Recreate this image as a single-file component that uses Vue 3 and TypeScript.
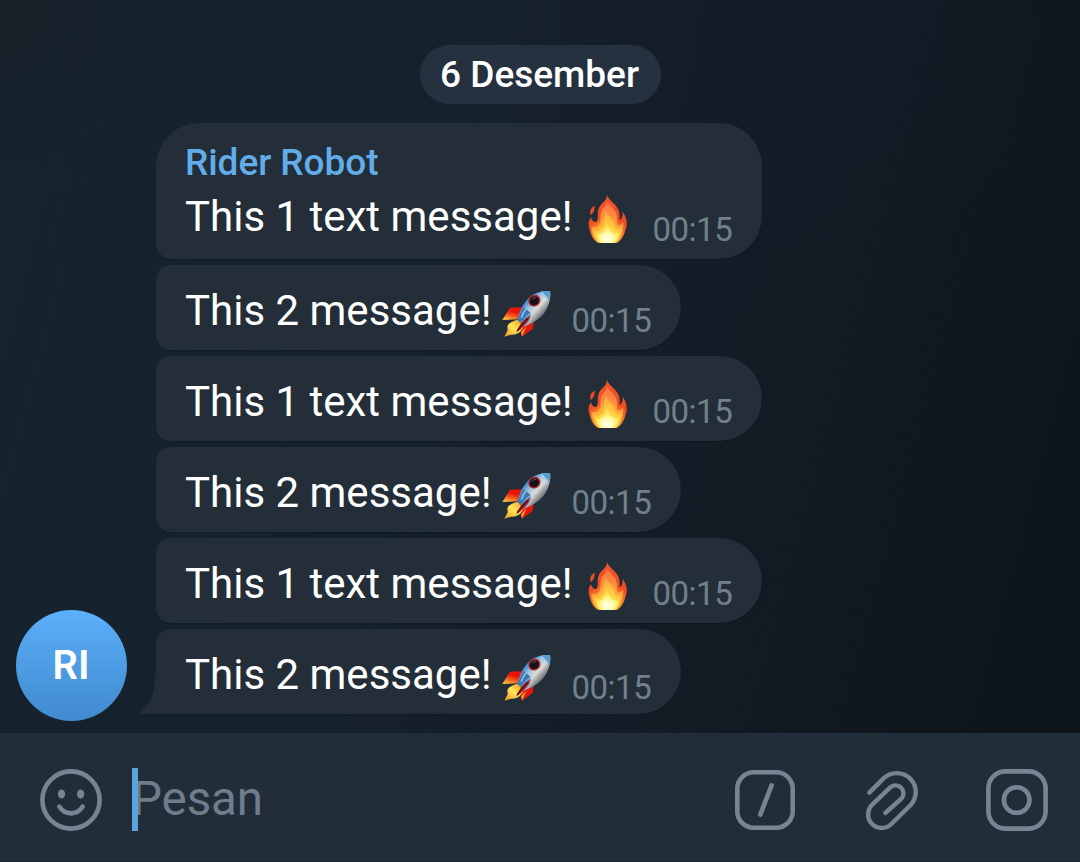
<script setup lang="ts">
type Emoji = 'fire' | 'rocket'

interface Message {
  id: number
  author?: string
  text: string
  emoji: Emoji
  time: string
}

const messages: Message[] = [
  { id: 1, author: 'Rider Robot', text: 'This 1 text message!', emoji: 'fire', time: '00:15' },
  { id: 2, text: 'This 2 message!', emoji: 'rocket', time: '00:15' },
  { id: 3, text: 'This 1 text message!', emoji: 'fire', time: '00:15' },
  { id: 4, text: 'This 2 message!', emoji: 'rocket', time: '00:15' },
  { id: 5, text: 'This 1 text message!', emoji: 'fire', time: '00:15' },
  { id: 6, text: 'This 2 message!', emoji: 'rocket', time: '00:15' },
]
</script>

<template>
  <div class="screen">
    <svg class="defs" width="0" height="0" aria-hidden="true">
      <defs>
        <radialGradient id="flameOuter" gradientUnits="userSpaceOnUse" cx="58" cy="128" r="130">
          <stop offset="0" stop-color="#ffd23c" />
          <stop offset="0.3" stop-color="#fb8a2c" />
          <stop offset="0.5" stop-color="#f04c22" />
          <stop offset="1" stop-color="#f0552c" />
        </radialGradient>
        <radialGradient id="flameMid" gradientUnits="userSpaceOnUse" cx="58" cy="128" r="115">
          <stop offset="0" stop-color="#ffe24c" />
          <stop offset="0.35" stop-color="#ffb038" />
          <stop offset="0.6" stop-color="#fc8a3c" />
          <stop offset="1" stop-color="#f97048" />
        </radialGradient>
        <radialGradient id="flameInner" gradientUnits="userSpaceOnUse" cx="58" cy="128" r="85">
          <stop offset="0" stop-color="#fff37a" />
          <stop offset="0.4" stop-color="#ffcf3e" />
          <stop offset="1" stop-color="#ffa048" />
        </radialGradient>
        <radialGradient id="flameCore" gradientUnits="userSpaceOnUse" cx="58" cy="132" r="48">
          <stop offset="0" stop-color="#fffff2" />
          <stop offset="0.35" stop-color="#fffbac" />
          <stop offset="0.75" stop-color="#ffe650" />
          <stop offset="1" stop-color="#ffd040" />
        </radialGradient>
        <linearGradient id="hull" gradientUnits="userSpaceOnUse" x1="68" y1="40" x2="112" y2="80">
          <stop offset="0" stop-color="#4a8fd0" />
          <stop offset="0.28" stop-color="#a3c4dc" />
          <stop offset="0.6" stop-color="#dcdcd6" />
          <stop offset="1" stop-color="#70777c" />
        </linearGradient>
        <linearGradient id="finLeft" gradientUnits="userSpaceOnUse" x1="34" y1="48" x2="22" y2="90">
          <stop offset="0.3" stop-color="#ec1408" />
          <stop offset="0.6" stop-color="#f4581c" />
          <stop offset="1" stop-color="#ffc83c" />
        </linearGradient>
        <linearGradient id="exhaust" x1="1" y1="0" x2="0" y2="1">
          <stop offset="0.1" stop-color="#f5a623" />
          <stop offset="0.5" stop-color="#ffe65a" />
          <stop offset="1" stop-color="#e8921c" />
        </linearGradient>
      </defs>
    </svg>

    <main class="chat">
      <div class="date">6 Desember</div>

      <div class="group">
        <div class="avatar">RI</div>
        <div class="bubbles">
          <article
            v-for="(m, i) in messages"
            :key="m.id"
            class="bubble"
            :class="{ first: i === 0, last: i === messages.length - 1 }"
          >
            <svg v-if="i === messages.length - 1" class="tail" viewBox="0 0 17 40" aria-hidden="true">
              <path d="M15 0 C15 20 11 30 1.2 35.6 C-.6 36.8 0 40 2 40 L17 40 L17 0 Z" />
            </svg>
            <div v-if="m.author" class="author">{{ m.author }}</div>
            <div class="line">
              <span class="text">{{ m.text }}</span>
              <svg v-if="m.emoji === 'fire'" class="emoji" viewBox="-15 0 150 144" role="img" aria-label="fire">
                <path d="M20 32 C8 38 4 48 8 60 C15 55 21 45 20 32 Z" fill="#ee4a28" />
                <path
                  d="M57 0 C62 16 84 26 92 46 C96 58 95 68 95 76 C102 71 105 62 104 50 C112 62 118 75 116 92 C115 98 113 102 112 106 C108 124 98 138 86 144 L32 144 C18 138 10 124 6 108 C3 98 0 90 3 79 C5 73 7 70 9 67 C12 78 18 82 24 81 C34 75 25 56 33 38 C39 24 56 20 57 0 Z"
                  fill="url(#flameOuter)"
                />
                <path
                  d="M56 18 C63 32 82 42 86 60 C88 76 86 85 88 91 C96 92 102 88 106 82 C107 105 99 132 84 144 L34 144 C19 134 10 116 11 94 C18 99 28 97 33 90 C42 78 34 66 40 50 C45 36 57 34 56 18 Z"
                  fill="url(#flameMid)"
                />
                <path
                  d="M54 44 C57 60 75 70 78 88 C79 98 83 103 89 103 C94 103 97 101 100 97 C100 120 92 138 80 144 L38 144 C27 138 19 125 18 106 C27 110 37 108 42 101 C52 88 44 66 54 44 Z"
                  fill="url(#flameInner)"
                />
                <path
                  d="M57 82 C62 96 66 108 74 113 C80 117 88 115 93 111 C92 128 85 139 76 144 L42 144 C32 139 26 129 25 114 C33 118 43 116 48 108 C53 100 54 94 57 82 Z"
                  fill="url(#flameCore)"
                />
              </svg>
              <svg v-else class="emoji rocket" viewBox="0 0 150 144" role="img" aria-label="rocket">
                <path d="M60 49 L24 50 L1 87 L46 85 Z" fill="url(#finLeft)" />
                <path d="M96 84 L92 114 L60 137 L58 110 Z" fill="#e5170d" />
                <path d="M74 106 L60 137 L57 124 Z" fill="#ff9a2e" />
                <path d="M47 86 C30 90 20 96 16 106 L17 118 L7 137 L28 131 C44 132 57 124 64 108 Z" fill="url(#exhaust)" />
                <path d="M144 1 C128 -2 104 3 87 15 C68 30 56 52 47 83 L64 108 C92 96 118 82 131 59 C143 40 147 18 144 1 Z" fill="url(#hull)" />
                <path d="M144 1 C134 -1 122 1 112 4 C121 10 134 21 141 31 C145 20 146 10 144 1 Z" fill="#5a9ccc" />
                <path d="M118 4 L138 25" stroke="#a9cfe8" stroke-width="5" />
                <path d="M66 48 C58 58 52 70 47 83 L58 98 C64 84 76 72 86 66 Z" fill="#3c78b4" />
                <path d="M73 52 C67 60 61 70 58 80" stroke="#8cbce0" stroke-width="5" fill="none" />
                <path d="M91 67 C78 76 94 84 64 108 L56 96 C64 84 76 73 91 67 Z" fill="#4f8fc8" />
                <path d="M86 74 C68 82 54 98 42 125 C60 113 76 96 86 74 Z" fill="#c41717" />
                <path d="M78 82 C66 92 55 106 46 119" stroke="#5e1018" stroke-width="5" fill="none" />
                <ellipse cx="97" cy="29" rx="19" ry="17" transform="rotate(-35 97 29)" fill="#b8242b" />
                <ellipse cx="97" cy="29" rx="14.5" ry="13" transform="rotate(-35 97 29)" fill="#15131a" />
                <path d="M90 26 C93 20 98 19 102 20" stroke="#5b5960" stroke-width="3" fill="none" />
              </svg>
              <time class="time">{{ m.time }}</time>
            </div>
          </article>
        </div>
      </div>
    </main>

    <footer class="composer">
      <svg class="icon smile" viewBox="0 0 62 62" aria-hidden="true">
        <circle cx="31" cy="31" r="28.6" />
        <path d="M19.3 37.6 C25 46.6 37 46.6 42.7 37.6" />
        <ellipse class="solid" cx="21.5" cy="25" rx="3.6" ry="4.6" />
        <ellipse class="solid" cx="40.6" cy="25" rx="3.6" ry="4.6" />
      </svg>
      <div class="field">
        <span class="caret"></span>
        <span class="placeholder">Pesan</span>
      </div>
      <svg class="icon command" viewBox="0 0 62 62" aria-hidden="true">
        <rect x="3.3" y="3.3" width="55.4" height="55.4" rx="16.5" />
        <path d="M37.6 16.3 L26.3 45.6" />
      </svg>
      <svg class="icon clip" viewBox="483 87 186 186" aria-hidden="true">
        <path
          d="M508 158 L550 116 A56.9 56.9 0 0 1 630.5 196.5 L574 252 A40.7 40.7 0 0 1 516.4 194.4 L571.5 141.5 A23.8 23.8 0 0 1 605 175 L556 219"
        />
      </svg>
      <svg class="icon camera" viewBox="0 0 62 62" aria-hidden="true">
        <rect x="2.4" y="2.4" width="57.2" height="57.2" rx="17" />
        <circle cx="30.7" cy="31" r="12.8" />
      </svg>
    </footer>
  </div>
</template>

<style>
body {
  margin: 0;
  background: #131c26;
}
</style>

<style scoped>
.screen {
  display: flex;
  flex-direction: column;
  width: 1080px;
  height: 862px;
  overflow: hidden;
  font-family: Roboto, 'Liberation Sans', sans-serif;
  background:
    radial-gradient(circle at 800px 40px, rgba(21, 26, 40, 0.6), rgba(21, 26, 40, 0) 260px),
    radial-gradient(circle at 0 0, rgba(22, 31, 38, 0.8), rgba(22, 31, 38, 0) 200px),
    linear-gradient(105deg, #162430 0%, #15212d 38%, #131b25 65%, #0f161c 86%, #0d1419 100%);
}

.defs {
  position: absolute;
}

.chat {
  display: flex;
  flex-direction: column;
  box-sizing: border-box;
  height: 733px;
  padding-top: 45px;
}

.date {
  align-self: center;
  box-sizing: border-box;
  width: 241px;
  height: 59px;
  border-radius: 30px;
  background: #25313f;
  color: #fff;
  font-size: 37px;
  font-weight: 500;
  line-height: 59px;
  text-align: center;
  text-indent: -1px;
  white-space: nowrap;
}

.group {
  display: flex;
  align-items: flex-end;
  margin-top: 19px;
  padding-left: 16px;
}

.avatar {
  flex: none;
  width: 111px;
  height: 111px;
  margin: 0 29px -7px 0;
  border-radius: 50%;
  background: linear-gradient(#5caffa, #408acf);
  color: #fff;
  font-size: 40px;
  font-weight: 600;
  line-height: 111px;
  text-align: center;
  text-indent: -1px;
}

.bubbles {
  display: flex;
  flex-direction: column;
  align-items: flex-start;
  gap: 6px;
}

.bubble {
  position: relative;
  box-sizing: border-box;
  height: 85px;
  padding: 20px 29px 0;
  border-radius: 15px 43px 43px 15px;
  background: #232e39;
  box-shadow: 0 1px 1px rgba(10, 16, 24, 0.35);
}

.bubble.first {
  height: 136px;
  border-top-left-radius: 43px;
}

.bubble.last {
  border-bottom-left-radius: 0;
}

.tail {
  position: absolute;
  left: -16px;
  bottom: 0;
  width: 17px;
  height: 40px;
  fill: #232e39;
}

.author {
  height: 48px;
  color: #62ade9;
  font-size: 37px;
  font-weight: 500;
  line-height: 39px;
  letter-spacing: -0.05px;
}

.line {
  display: flex;
  align-items: flex-start;
  height: 50px;
}

.text {
  color: #fff;
  font-size: 42px;
  line-height: 51px;
  white-space: nowrap;
}

.emoji {
  flex: none;
  width: 50px;
  height: 48px;
  margin: 4px 0 0 10px;
}

.emoji.rocket {
  margin-top: 6px;
}

.time {
  margin: 15px 1px 0 20px;
  color: #71808d;
  font-size: 33px;
  line-height: 42px;
  letter-spacing: -0.5px;
}

.first .time,
.last .time {
  margin-top: 18px;
}

.composer {
  display: flex;
  align-items: flex-start;
  box-sizing: border-box;
  height: 129px;
  padding: 36px 32px 0 40px;
  background: #222d3a;
  border-bottom: 1px solid #1c2533;
}

.icon {
  flex: none;
  width: 62px;
  height: 62px;
  fill: none;
  stroke: #778592;
  stroke-width: 4.6;
  stroke-linecap: round;
  stroke-linejoin: round;
}

.icon .solid {
  fill: #778592;
  stroke: none;
}

.field {
  position: relative;
  flex: 1;
  height: 62px;
  margin-left: 30px;
}

.caret {
  position: absolute;
  left: 0;
  top: -1px;
  width: 6px;
  height: 63px;
  background: #5ba4de;
}

.placeholder {
  display: block;
  color: #6f7d8a;
  font-size: 47.5px;
  line-height: 61px;
  letter-spacing: -0.1px;
}

.clip {
  margin-left: 65px;
  stroke-width: 13.2;
}

.camera {
  margin-left: 63px;
}
</style>
